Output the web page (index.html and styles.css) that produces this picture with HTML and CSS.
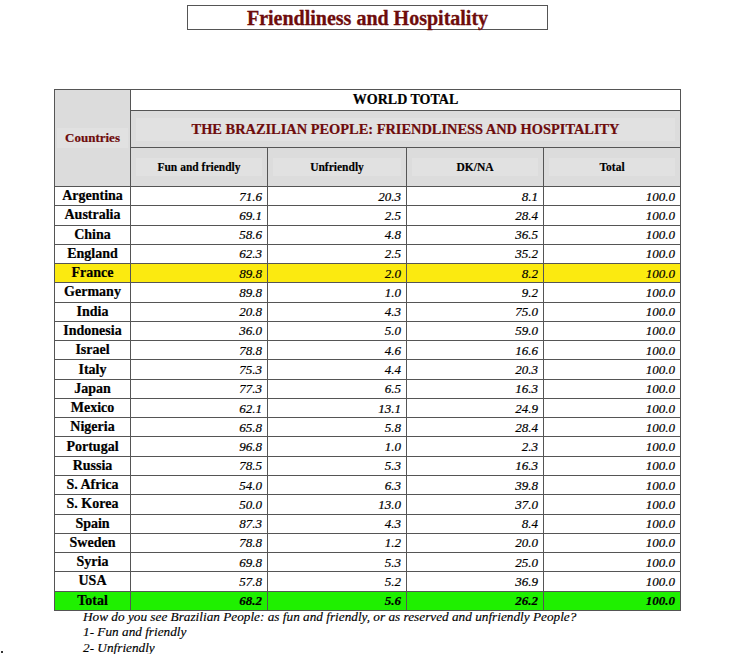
FILE: index.html
```html
<!DOCTYPE html>
<html>
<head>
<meta charset="utf-8">
<link rel="stylesheet" href="styles.css">
</head>
<body>
<div class="page">
  <div class="title-box"><h1 class="title">Friendliness and Hospitality</h1></div>
  <table class="data">
    <colgroup>
      <col class="c-country"><col class="c-num"><col class="c-num2"><col class="c-num"><col class="c-num">
    </colgroup>
    <thead>
      <tr class="r-world">
        <th class="h-country" rowspan="3"><span class="inner">Countries</span></th>
        <th class="h-world" colspan="4">WORLD TOTAL</th>
      </tr>
      <tr class="r-brazil">
        <th class="h-brazil" colspan="4"><span class="inner">THE BRAZILIAN PEOPLE: FRIENDLINESS AND HOSPITALITY</span></th>
      </tr>
      <tr class="r-sub">
        <th class="h-sub"><span class="inner">Fun and friendly</span></th>
        <th class="h-sub"><span class="inner">Unfriendly</span></th>
        <th class="h-sub"><span class="inner">DK/NA</span></th>
        <th class="h-sub"><span class="inner">Total</span></th>
      </tr>
    </thead>
    <tbody>
      <tr><td class="name">Argentina</td><td>71.6</td><td>20.3</td><td>8.1</td><td>100.0</td></tr>
      <tr><td class="name">Australia</td><td>69.1</td><td>2.5</td><td>28.4</td><td>100.0</td></tr>
      <tr><td class="name">China</td><td>58.6</td><td>4.8</td><td>36.5</td><td>100.0</td></tr>
      <tr><td class="name">England</td><td>62.3</td><td>2.5</td><td>35.2</td><td>100.0</td></tr>
      <tr class="hl-yellow"><td class="name">France</td><td>89.8</td><td>2.0</td><td>8.2</td><td>100.0</td></tr>
      <tr><td class="name">Germany</td><td>89.8</td><td>1.0</td><td>9.2</td><td>100.0</td></tr>
      <tr><td class="name">India</td><td>20.8</td><td>4.3</td><td>75.0</td><td>100.0</td></tr>
      <tr><td class="name">Indonesia</td><td>36.0</td><td>5.0</td><td>59.0</td><td>100.0</td></tr>
      <tr><td class="name">Israel</td><td>78.8</td><td>4.6</td><td>16.6</td><td>100.0</td></tr>
      <tr><td class="name">Italy</td><td>75.3</td><td>4.4</td><td>20.3</td><td>100.0</td></tr>
      <tr><td class="name">Japan</td><td>77.3</td><td>6.5</td><td>16.3</td><td>100.0</td></tr>
      <tr><td class="name">Mexico</td><td>62.1</td><td>13.1</td><td>24.9</td><td>100.0</td></tr>
      <tr><td class="name">Nigeria</td><td>65.8</td><td>5.8</td><td>28.4</td><td>100.0</td></tr>
      <tr><td class="name">Portugal</td><td>96.8</td><td>1.0</td><td>2.3</td><td>100.0</td></tr>
      <tr><td class="name">Russia</td><td>78.5</td><td>5.3</td><td>16.3</td><td>100.0</td></tr>
      <tr><td class="name">S. Africa</td><td>54.0</td><td>6.3</td><td>39.8</td><td>100.0</td></tr>
      <tr><td class="name">S. Korea</td><td>50.0</td><td>13.0</td><td>37.0</td><td>100.0</td></tr>
      <tr><td class="name">Spain</td><td>87.3</td><td>4.3</td><td>8.4</td><td>100.0</td></tr>
      <tr><td class="name">Sweden</td><td>78.8</td><td>1.2</td><td>20.0</td><td>100.0</td></tr>
      <tr><td class="name">Syria</td><td>69.8</td><td>5.3</td><td>25.0</td><td>100.0</td></tr>
      <tr><td class="name">USA</td><td>57.8</td><td>5.2</td><td>36.9</td><td>100.0</td></tr>
      <tr class="hl-green total"><td class="name">Total</td><td>68.2</td><td>5.6</td><td>26.2</td><td>100.0</td></tr>
    </tbody>
  </table>
  <div class="notes">
    <p>How do you see Brazilian People: as fun and friendly, or as reserved and unfriendly People?</p>
    <p>1- Fun and friendly</p>
    <p>2- Unfriendly</p>
  </div>
  <span class="corner-dot"></span>
</div>
</body>
</html>
```

FILE: styles.css
```css
html, body {
  margin: 0;
  padding: 0;
  background: #ffffff;
}

body {
  font-family: "Liberation Serif", "Times New Roman", serif;
  color: #111;
}

.page {
  position: relative;
  width: 736px;
  height: 654px;
  padding-top: 5px;
  box-sizing: border-box;
  overflow: hidden;
}

.title-box {
  margin-left: 187px;
  width: 361px;
  height: 25px;
  box-sizing: border-box;
  border: 1px solid #555;
  display: flex;
  justify-content: center;
  align-items: center;
}

.title {
  margin: 0;
  font-size: 20px;
  font-weight: bold;
  color: #6e0c0c;
  line-height: 1;
  -webkit-text-stroke: 0.3px #6e0c0c;
}

.data {
  margin-top: 59px;
  margin-left: 54px;
  width: 627px;
  border-collapse: collapse;
  table-layout: fixed;
  border: 1.5px solid #444;
}

.c-country { width: 76px; }
.c-num { width: 137px; }
.c-num2 { width: 139px; }

.data th,
.data td {
  border: 1px solid #555;
  padding: 0;
}

.h-country {
  background: #dcdcdc;
  color: #6e0c0c;
  font-size: 13px;
  font-weight: bold;
  vertical-align: middle;
  -webkit-text-stroke: 0.2px #6e0c0c;
}

.h-country .inner {
  display: block;
  margin: 0 2px;
  padding: 2px 0;
  background: #e1e1e1;
}

.r-world { height: 21px; }
.r-brazil { height: 37px; }
.r-sub { height: 39px; }

.h-world {
  background: #fff;
  font-size: 14px;
  font-weight: bold;
  color: #000;
  text-align: center;
  vertical-align: middle;
  -webkit-text-stroke: 0.2px #000;
}

.h-brazil {
  background: #dcdcdc;
  color: #6e0c0c;
  font-size: 14.4px;
  font-weight: bold;
  text-align: center;
  -webkit-text-stroke: 0.2px #6e0c0c;
}

.h-brazil .inner {
  display: block;
  margin: 0 5px;
  padding: 3px 0;
  background: #e1e1e1;
}

.h-sub {
  background: #dcdcdc;
  font-size: 11.5px;
  font-weight: bold;
  color: #000;
  text-align: center;
  -webkit-text-stroke: 0.15px #000;
}

.h-sub .inner {
  display: block;
  margin: 0 5px;
  padding: 3px 0;
  background: #e1e1e1;
}

.data tbody tr { height: 19.27px; }

.data td {
  font-size: 13px;
  font-style: italic;
  text-align: right;
  padding-right: 5px;
  line-height: 1;
  vertical-align: middle;
  color: #000;
  -webkit-text-stroke: 0.2px #000;
}

.data td.name {
  font-style: normal;
  font-weight: bold;
  font-size: 14px;
  text-align: center;
  padding-right: 0;
}

.hl-yellow td { background: #fbea10; }
.hl-green td { background: #1ff000; }
.total td { font-weight: bold; }

.notes {
  margin-left: 83px;
  margin-top: -2px;
  font-style: italic;
  font-size: 13.25px;
  line-height: 15.5px;
  color: #000;
  -webkit-text-stroke: 0.15px #000;
}

.notes p { margin: 0; }

.corner-dot {
  position: absolute;
  left: 1px;
  top: 651px;
  width: 2px;
  height: 2px;
  background: #333;
}
```
